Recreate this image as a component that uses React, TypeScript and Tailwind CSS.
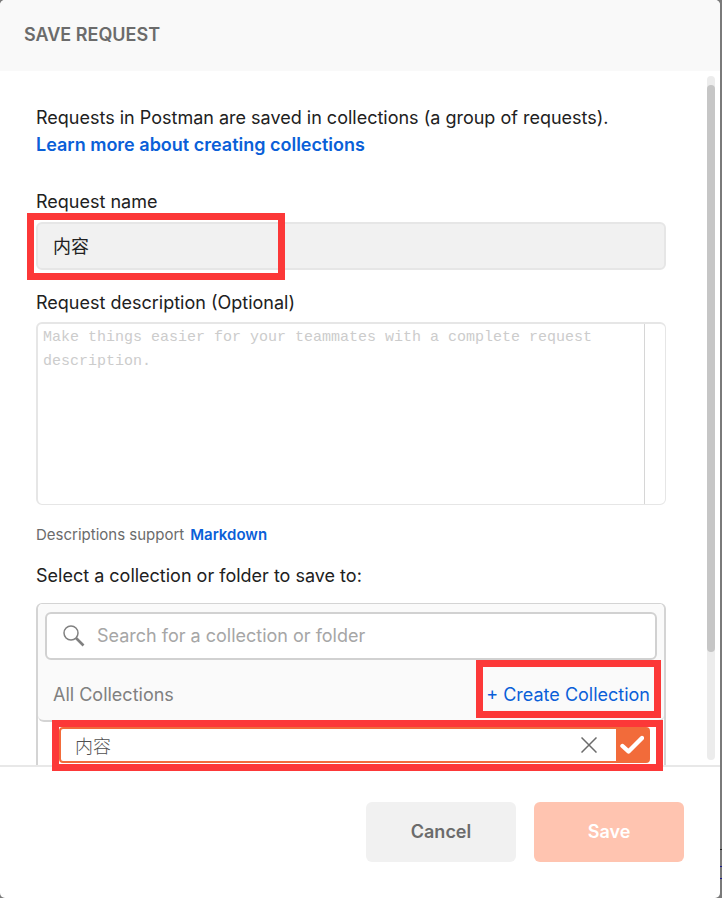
import type { ReactNode } from "react";

const FONT = "font-['Inter','Noto_Sans_CJK_SC',sans-serif]";

function Highlight({ className }: { className: string }) {
  return (
    <span
      aria-hidden="true"
      className={`pointer-events-none absolute z-10 border-7 border-[#fc3838] ${className}`}
    />
  );
}

function FieldLabel({ htmlFor, children }: { htmlFor: string; children: ReactNode }) {
  return (
    <label htmlFor={htmlFor} className="block text-lg leading-[27px]">
      {children}
    </label>
  );
}

function SearchIcon() {
  return (
    <svg width="22" height="22" viewBox="0 0 22 22" fill="none" className="shrink-0" aria-hidden="true">
      <circle cx="8" cy="8" r="7" stroke="#808080" strokeWidth="1.5" />
      <path d="M13 13 L20.5 20.5" stroke="#808080" strokeWidth="2.6" />
    </svg>
  );
}

function CloseIcon() {
  return (
    <svg width="16" height="16" viewBox="0 0 16 16" fill="none" aria-hidden="true">
      <path d="M0.5 0.5 L15.5 15.5 M15.5 0.5 L0.5 15.5" stroke="#6b6b6b" strokeWidth="1.5" />
    </svg>
  );
}

function CheckIcon() {
  return (
    <svg width="24" height="20" viewBox="0 0 24 20" fill="none" aria-hidden="true">
      <path d="M2.5 11 L8.5 16.5 L22 3" stroke="#fff" strokeWidth="4.4" strokeLinecap="round" strokeLinejoin="round" />
    </svg>
  );
}

function CollectionPicker() {
  return (
    <div className="mt-[14px] flex flex-1 flex-col rounded-t-md border-x-2 border-t border-[#d4d4d4]">
      <div className="rounded-md border-b-2 border-[#d4d4d4] bg-[#fafafa] px-[7px] pt-2">
        <div className="flex h-12 items-center gap-3 rounded-md border-2 border-[#d1d1d1] bg-white px-4">
          <SearchIcon />
          <input
            type="text"
            aria-label="Search for a collection or folder"
            placeholder="Search for a collection or folder"
            className="min-w-0 flex-1 text-lg outline-none placeholder:text-[#a6a6a6]"
          />
        </div>
        <div className="flex h-[60px] items-center justify-between pt-2 pr-[7px] pl-2 text-lg leading-[27px]">
          <span className="text-[#808080]">All Collections</span>
          <div className="relative">
            <button type="button" className="block text-[#0a5fd8]">
              + Create Collection
            </button>
            <Highlight className="-top-[21px] -right-[11px] -left-[10px] h-[58px]" />
          </div>
        </div>
      </div>
      <div className="relative mt-[5px] mr-[14px] ml-[21px] flex h-9 rounded-[4px] border-2 border-[#f26b3a] bg-white">
        <input
          type="text"
          aria-label="Collection name"
          defaultValue="内容"
          className="min-w-0 flex-1 pt-1 pl-[14px] text-lg font-light text-[#505050] outline-none"
        />
        <button type="button" aria-label="Discard" className="flex w-[54px] items-center justify-center">
          <CloseIcon />
        </button>
        <button type="button" aria-label="Confirm" className="flex w-8 items-center justify-center bg-[#f26b3a]">
          <CheckIcon />
        </button>
        <Highlight className="-top-[9px] -right-[15px] -left-[9px] h-[51px]" />
      </div>
    </div>
  );
}

function BackdropEdge() {
  return (
    <div className="flex w-[2px] flex-col justify-end bg-[#7a7a7a]" aria-hidden="true">
      <svg width="2" height="50" viewBox="0 0 2 50">
        <path d="M0 1.5 H2" stroke="#222" />
        <path d="M0 18.5 H2 M0 30.5 H2" stroke="#1a1a8c" />
      </svg>
    </div>
  );
}

export default function App() {
  return (
    <div className={`flex min-h-screen bg-[#7a7a7a] text-[#212121] ${FONT}`}>
      <main className="flex min-w-0 flex-1 flex-col rounded-[5px] bg-white">
        <header className="rounded-t-[5px] bg-[#f9f9f9] px-6 pt-[21px] pb-[23px]">
          <h1 className="text-lg leading-[27px] font-semibold text-[#6b6b6b]">SAVE REQUEST</h1>
        </header>

        <div className="flex flex-1">
          <form className="flex min-w-0 flex-1 flex-col pt-[33px] pr-[41px] pl-9">
            <p className="text-lg leading-[27px]">
              Requests in Postman are saved in collections (a group of requests).
              <br />
              <a href="#collections" className="font-semibold text-[#0a5fd8]">
                Learn more about creating collections
              </a>
            </p>

            <div className="mt-[30px]">
              <FieldLabel htmlFor="request-name">Request name</FieldLabel>
              <div className="relative mt-[7px]">
                <input
                  id="request-name"
                  type="text"
                  defaultValue="内容"
                  className="block h-12 w-full rounded-md border-2 border-[#e6e6e6] bg-[#f1f1f1] px-[15px] pb-[2px] text-lg outline-none"
                />
                <Highlight className="-top-[9px] -left-[9px] h-[67px] w-[258px]" />
              </div>
            </div>

            <div className="mt-[19px]">
              <FieldLabel htmlFor="request-description">Request description (Optional)</FieldLabel>
              <div className="mt-[6px] flex h-[183px] rounded-md border-t-2 border-r border-b border-l-2 border-[#e6e6e6] pr-5">
                <textarea
                  id="request-description"
                  placeholder="Make things easier for your teammates with a complete request description."
                  className="block h-full min-w-0 flex-1 resize-none border-r border-[#d6d6d6] px-[5px] pt-[2px] font-['Liberation_Mono',monospace] text-[15px] leading-6 outline-none placeholder:text-[#cccccc]"
                />
              </div>
            </div>

            <p className="mt-[18px] flex gap-[6px] text-[15px] leading-6 text-[#6b6b6b]">
              <span>Descriptions support</span>
              <a href="#markdown" className="font-semibold text-[#0a5fd8]">
                Markdown
              </a>
            </p>

            <h2 className="mt-[15px] text-lg leading-[27px]">Select a collection or folder to save to:</h2>
            <CollectionPicker />
          </form>

          <div className="flex w-[13px] flex-col pt-[5px] pr-[5px] pb-[5px]" aria-hidden="true">
            <div className="flex flex-1 flex-col rounded-full bg-[#ececec] pt-[9px]">
              <div className="h-[84%] rounded-full bg-[#c6c6c6]" />
            </div>
          </div>
        </div>

        <footer className="flex justify-end gap-[18px] border-t-2 border-[#e8e8e8] px-9 pt-[35px] pb-9 text-lg font-semibold">
          <button type="button" className="h-[60px] w-[150px] rounded-md bg-[#f1f1f1] text-[#6b6b6b]">
            Cancel
          </button>
          <button type="button" className="h-[60px] w-[150px] rounded-md bg-[#ffc4b0] text-white">
            Save
          </button>
        </footer>
      </main>
      <BackdropEdge />
    </div>
  );
}
